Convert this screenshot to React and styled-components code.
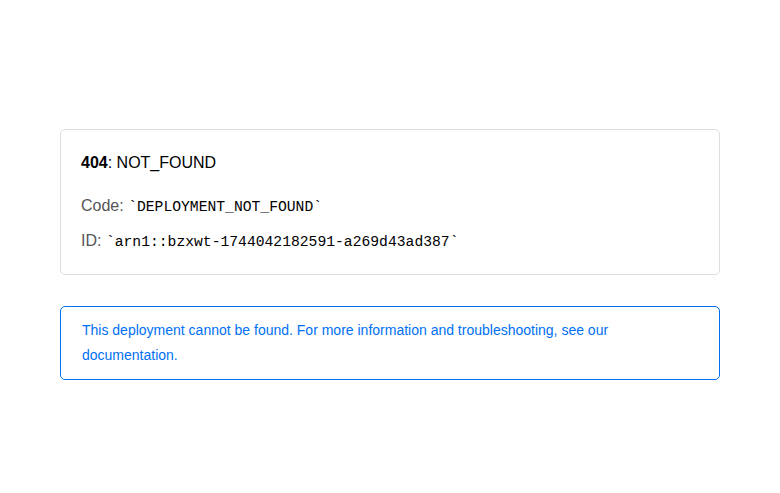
import React from "react";
import styled, { createGlobalStyle } from "styled-components";

const GlobalStyle = createGlobalStyle`
  html, body {
    margin: 0;
    padding: 0;
    background: #fff;
    font-family: "Liberation Sans", Arial, sans-serif;
  }
`;

const Page = styled.main`
  box-sizing: border-box;
  width: 780px;
  min-height: 493px;
  padding: 129px 60px 0;
`;

const ErrorCard = styled.section`
  border: 1px solid #dddddd;
  border-radius: 5px;
  padding: 21px 20px 20px;
`;

const Title = styled.h1`
  margin: 0;
  font-size: 16px;
  font-weight: 400;
  line-height: 24px;
  color: #000;
`;

const Detail = styled.p`
  margin: ${(p) => p.$gap}px 0 0;
  font-size: 16px;
  line-height: 24px;
  color: #555;
`;

const Mono = styled.code`
  font-family: "Liberation Mono", "DejaVu Sans Mono", monospace;
  font-size: 14.7px;
  color: #000;
`;

const InfoBox = styled.div`
  margin-top: 31px;
  border: 1px solid #0070f3;
  border-radius: 5px;
  padding: 11px 21px;
  font-size: 14px;
  line-height: 25px;
  color: #0070f3;
`;

export default function App() {
  return (
    <>
      <GlobalStyle />
      <Page>
        <ErrorCard>
          <Title>
            <strong>404</strong>: NOT_FOUND
          </Title>
          <Detail $gap={19}>
            Code: <Mono>`DEPLOYMENT_NOT_FOUND`</Mono>
          </Detail>
          <Detail $gap={10}>
            ID: <Mono>`arn1::bzxwt-1744042182591-a269d43ad387`</Mono>
          </Detail>
        </ErrorCard>
        <InfoBox>
          This deployment cannot be found. For more information and troubleshooting, see our
          documentation.
        </InfoBox>
      </Page>
    </>
  );
}
